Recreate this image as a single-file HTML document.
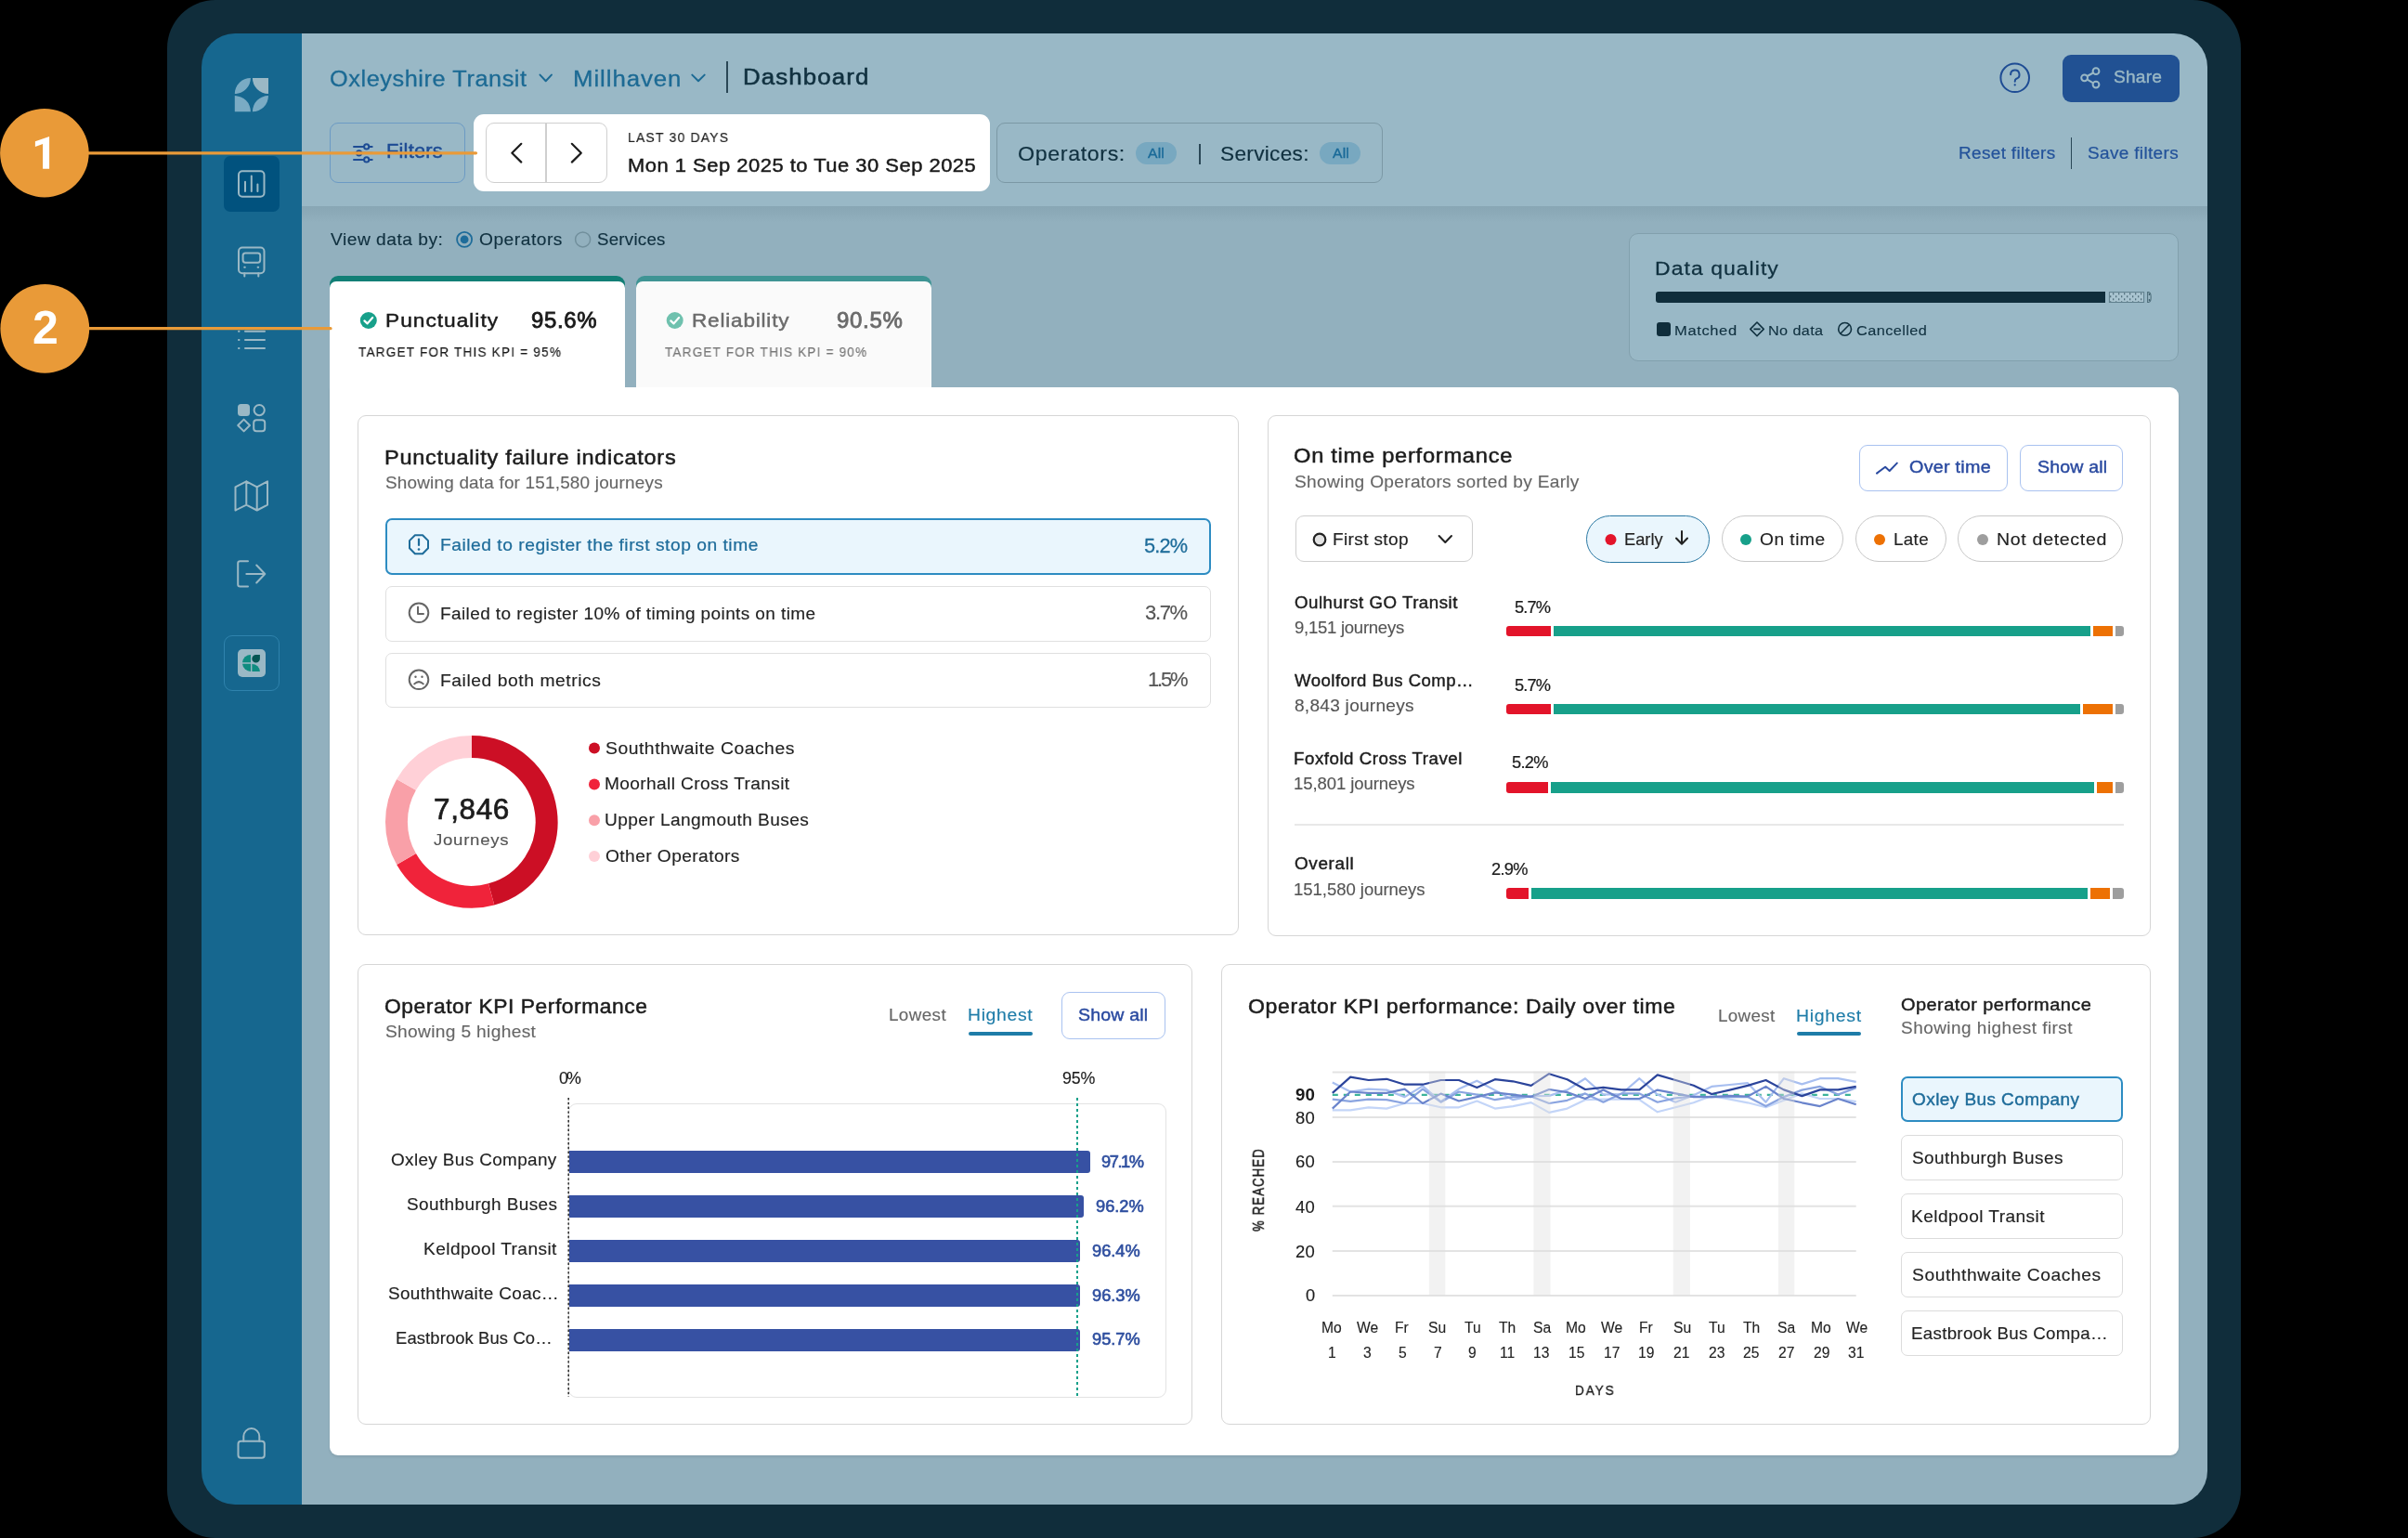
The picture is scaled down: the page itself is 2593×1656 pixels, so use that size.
<!DOCTYPE html>
<html><head><meta charset="utf-8"><style>
html,body{margin:0;padding:0;}
body{width:2593px;height:1656px;position:relative;overflow:hidden;background:#000;font-family:"Liberation Sans", sans-serif;}
.t{position:absolute;white-space:nowrap;line-height:1;font-family:"Liberation Sans", sans-serif;will-change:transform;}
svg{position:absolute;overflow:visible;}
</style></head><body>
<div style="position:absolute;left:180.0px;top:0.0px;width:2233.0px;height:1656.0px;background:#102d3b;border-radius:52px;"></div>
<div style="position:absolute;left:0;top:0;width:2593px;height:1656px;clip-path:inset(36px 216px 36px 217px round 36px);">
<div style="position:absolute;left:217.0px;top:36.0px;width:108.0px;height:1584.0px;background:#16678f;"></div>
<div style="position:absolute;left:325.0px;top:36.0px;width:2052.0px;height:186.0px;background:#99b8c6;"></div>
<div style="position:absolute;left:325.0px;top:222.0px;width:2052.0px;height:1398.0px;background:#92b0be;"></div>
<div style="position:absolute;left:325.0px;top:222.0px;width:2052.0px;height:18.0px;background:linear-gradient(#88a6b4,rgba(146,176,190,0));"></div>
</div>
<svg style="left:250px;top:80px;" width="45" height="45" viewBox="250 80 45 45"><path d="M252.8,101.1 A17.1,17.1 0 0 1 269.9,84.0 A17.1,17.1 0 0 1 252.8,101.1 Z" fill="#7aabc4"/><path d="M271.9,84.0 L289.0,84.0 L289.0,101.1 A17.1,17.1 0 0 1 271.9,84.0 Z" fill="#9ab8c5"/><path d="M252.8,103.1 A17.1,17.1 0 0 1 269.9,120.2 L252.8,120.2 Z" fill="#7aabc4"/><path d="M271.9,120.2 A17.1,17.1 0 0 1 289.0,103.1 A17.1,17.1 0 0 1 271.9,120.2 Z" fill="#7aabc4"/></svg>
<div style="position:absolute;left:241.0px;top:168.0px;width:60.0px;height:60.0px;background:#01527e;border-radius:7px;"></div>
<svg style="left:250px;top:178px;" width="42" height="42" viewBox="250 178 42 42"><rect x="257" y="184.3" width="27.5" height="27.5" rx="4" fill="none" stroke="#9ab8c5" stroke-width="2" stroke-linecap="round" stroke-linejoin="round"/><path d="M264,195.8 V206 M270.8,189.5 V206 M277.4,198.5 V206" fill="none" stroke="#9ab8c5" stroke-width="2" stroke-linecap="round" stroke-linejoin="round"/></svg>
<svg style="left:250px;top:260px;" width="42" height="42" viewBox="250 260 42 42"><rect x="257" y="266.6" width="27.5" height="27.6" rx="4" fill="none" stroke="#9ab8c5" stroke-width="2" stroke-linecap="round" stroke-linejoin="round"/><rect x="261.6" y="272.4" width="18.6" height="10.3" rx="2.6" fill="none" stroke="#9ab8c5" stroke-width="2" stroke-linecap="round" stroke-linejoin="round"/><path d="M263.2,287.8 h0.6 M277.6,287.8 h0.6 M263.3,294.2 V297.4 M278.3,294.2 V297.4" fill="none" stroke="#9ab8c5" stroke-width="2" stroke-linecap="round" stroke-linejoin="round"/></svg>
<svg style="left:250px;top:350px;" width="42" height="30" viewBox="250 350 42 30"><path d="M257,356.8 h0.5 M257,366 h0.5 M257,374.9 h0.5 M264,356.8 H285 M264,366 H285 M264,374.9 H285" fill="none" stroke="#9ab8c5" stroke-width="2" stroke-linecap="round" stroke-linejoin="round"/></svg>
<svg style="left:250px;top:430px;" width="42" height="42" viewBox="250 430 42 42"><rect x="256" y="435.1" width="13" height="13" rx="3.5" fill="#9ab8c5"/><circle cx="279.2" cy="441.6" r="5.6" fill="none" stroke="#9ab8c5" stroke-width="2" stroke-linecap="round" stroke-linejoin="round"/><path d="M262.6,451.6 L269,458 L262.6,464.4 L256.2,458 Z" fill="none" stroke="#9ab8c5" stroke-width="2" stroke-linecap="round" stroke-linejoin="round"/><rect x="273.2" y="452.2" width="12" height="12" rx="3" fill="none" stroke="#9ab8c5" stroke-width="2" stroke-linecap="round" stroke-linejoin="round"/></svg>
<svg style="left:248px;top:512px;" width="46" height="44" viewBox="248 512 46 44"><path d="M253.5,524.3 L265.3,518.3 L276.7,524.3 L288,518.3 L288,543.6 L276.7,549.5 L265.3,543.6 L253.5,549.5 Z M265.3,518.3 V543.6 M276.7,524.3 V549.5" fill="none" stroke="#9ab8c5" stroke-width="2" stroke-linecap="round" stroke-linejoin="round"/></svg>
<svg style="left:250px;top:598px;" width="42" height="42" viewBox="250 598 42 42"><path d="M267,604.2 H258.5 Q256.2,604.2 256.2,606.5 V629.2 Q256.2,631.5 258.5,631.5 H267" fill="none" stroke="#9ab8c5" stroke-width="2" stroke-linecap="round" stroke-linejoin="round"/><path d="M265.3,618 H285.3 M276.2,608.5 L285.3,618 L276.2,627.5" fill="none" stroke="#9ab8c5" stroke-width="2" stroke-linecap="round" stroke-linejoin="round"/></svg>
<div style="position:absolute;left:241.0px;top:684.0px;width:59.5px;height:59.5px;border:1.8px solid #2f83ad;border-radius:9px;box-sizing:border-box;"></div>
<div style="position:absolute;left:256.0px;top:699.0px;width:30.0px;height:30.0px;background:#9ab8c5;border-radius:5px;"></div>
<svg style="left:256px;top:699px;" width="30" height="30" viewBox="256 699 30 30"><path d="M270,704.9 A9,9 0 0 0 261,713.2 H270 Z" fill="#0e8c80"/><path d="M261,714.8 A9,9 0 0 0 270,722.9 V714.8 Z" fill="#0e8c80"/><path d="M271.4,714.9 A8.4,8.4 0 0 1 279.9,722.9 H271.4 Z" fill="#0e8c80"/><path d="M271.3,709.3 A4.3,4.3 0 0 0 279.9,709.3 V705 H275.6 A4.3,4.3 0 0 0 271.3,709.3 Z" fill="#045552"/></svg>
<svg style="left:250px;top:1530px;" width="42" height="46" viewBox="250 1530 42 46"><path d="M262.3,1551.8 V1546.6 A8.5,8.5 0 0 1 279.3,1546.6 V1551.8" fill="none" stroke="#9ab8c5" stroke-width="2" stroke-linecap="round" stroke-linejoin="round"/><rect x="256.5" y="1551.8" width="28.3" height="17.9" rx="3" fill="none" stroke="#9ab8c5" stroke-width="2" stroke-linecap="round" stroke-linejoin="round"/></svg>
<svg style="left:575px;top:72px;" width="190" height="24" viewBox="575 72 190 24"><path d="M581.5,80.6 L587.7,87.2 L593.9,80.6 M745.3,80.6 L752,87.2 L758.7,80.6" fill="none" stroke="#1c6a94" stroke-width="2" stroke-linecap="round" stroke-linejoin="round"/></svg>
<div style="position:absolute;left:782.0px;top:66.2px;width:2.0px;height:34.1px;background:#2a4756;"></div>
<svg style="left:2150px;top:64px;" width="40" height="40" viewBox="2150 64 40 40"><circle cx="2169.7" cy="83.8" r="15.3" fill="none" stroke="#1e4c94" stroke-width="2"/><path d="M2165.1,80.3 A4.7,4.7 0 1 1 2171.4,84.7 Q2169.7,85.6 2169.7,87.8" fill="none" stroke="#1e4c94" stroke-width="2" stroke-linecap="round"/><circle cx="2169.7" cy="91.4" r="1.15" fill="#1e4c94"/></svg>
<div style="position:absolute;left:2221.0px;top:58.8px;width:126.0px;height:50.8px;background:#215193;border-radius:9px;"></div>
<svg style="left:2235px;top:66px;" width="30" height="34" viewBox="2235 66 30 34"><circle cx="2257" cy="76.7" r="3.4" fill="none" stroke="#9ab8c5" stroke-width="2"/><circle cx="2244.6" cy="83.8" r="3.4" fill="none" stroke="#9ab8c5" stroke-width="2"/><circle cx="2257" cy="91.1" r="3.4" fill="none" stroke="#9ab8c5" stroke-width="2"/><path d="M2247.6,82 L2254,78.5 M2247.6,85.6 L2254,89.3" stroke="#9ab8c5" stroke-width="2"/></svg>
<div style="position:absolute;left:355.0px;top:132.3px;width:146.4px;height:65.1px;border:1.5px solid #6b9ac4;border-radius:9px;box-sizing:border-box;"></div>
<svg style="left:375px;top:150px;" width="32" height="30" viewBox="375 150 32 30"><path d="M381,157.9 H392 M397.5,157.9 H400.7 M381,164.8 H384 M389.3,164.8 H400.7 M381,171.9 H392 M397.5,171.9 H400.7" stroke="#1e4c94" stroke-width="2" stroke-linecap="round"/><circle cx="394.7" cy="157.9" r="2.6" fill="none" stroke="#1e4c94" stroke-width="2"/><circle cx="386.6" cy="164.8" r="2.6" fill="none" stroke="#1e4c94" stroke-width="2"/><circle cx="394.7" cy="171.9" r="2.6" fill="none" stroke="#1e4c94" stroke-width="2"/></svg>
<div style="position:absolute;left:510.2px;top:122.8px;width:555.8px;height:82.9px;background:#fff;border-radius:11px;"></div>
<div style="position:absolute;left:523.2px;top:132.0px;width:130.9px;height:65.4px;border:1.5px solid #cfcfcf;border-radius:9px;box-sizing:border-box;"></div>
<div style="position:absolute;left:587.1px;top:132.7px;width:1.5px;height:64.0px;background:#cfcfcf;"></div>
<svg style="left:545px;top:150px;" width="90" height="30" viewBox="545 150 90 30"><path d="M561.3,154.8 L551.3,164.7 L561.3,174.6 M615.8,154.8 L625.8,164.7 L615.8,174.6" fill="none" stroke="#1c1c1c" stroke-width="2.2" stroke-linecap="round" stroke-linejoin="round"/></svg>
<div style="position:absolute;left:1073.0px;top:132.3px;width:416.0px;height:65.1px;border:1.5px solid #7b98a5;border-radius:9px;box-sizing:border-box;"></div>
<div style="position:absolute;left:1223.0px;top:153.0px;width:44.0px;height:24.0px;background:#78a8c0;border-radius:12px;"></div>
<div style="position:absolute;left:1291.2px;top:155.0px;width:1.8px;height:21.5px;background:#2a4756;"></div>
<div style="position:absolute;left:1421.0px;top:153.0px;width:43.5px;height:24.0px;background:#78a8c0;border-radius:12px;"></div>
<div style="position:absolute;left:2229.5px;top:148.0px;width:1.8px;height:34.0px;background:#2a4756;"></div>
<svg style="left:488px;top:246px;" width="150" height="24" viewBox="488 246 150 24"><circle cx="500.1" cy="257.9" r="8" fill="none" stroke="#1e6c9a" stroke-width="1.8"/><circle cx="500.1" cy="257.9" r="4.4" fill="#1e6c9a"/><circle cx="627.6" cy="257.9" r="8" fill="none" stroke="#718f9c" stroke-width="1.5"/></svg>
<div style="position:absolute;left:1753.6px;top:250.5px;width:592.4px;height:138.0px;background:#99b8c6;border:1.5px solid #82a0ad;border-radius:10px;box-sizing:border-box;"></div>
<div style="position:absolute;left:1783.4px;top:314.3px;width:483.8px;height:11.5px;background:#0f2d3b;border-radius:3px 0 0 3px;"></div>
<svg style="left:2268px;top:312px" width="52" height="16" viewBox="2268 312 52 16"><defs><pattern id="dq" x="2271" y="313.3" width="6" height="6" patternUnits="userSpaceOnUse"><rect width="6" height="6" fill="#a9c4d0"/><circle cx="4.7" cy="3" r="0.75" fill="#1a3a48"/><circle cx="1.7" cy="6" r="0.75" fill="#1a3a48"/><circle cx="1.7" cy="0" r="0.75" fill="#1a3a48"/></pattern></defs><rect x="2271.4" y="314.6" width="37.2" height="10.9" fill="url(#dq)" stroke="#5f7f8d" stroke-width="1"/><path d="M2312.6,314.6 H2313.6 A2.6,5.45 0 0 1 2313.6,325.5 H2312.6 Z" fill="#9ab8c5" stroke="#4f6f7c" stroke-width="1.1"/><circle cx="2314.4" cy="317" r="0.8" fill="#1a3a48"/><circle cx="2314.4" cy="323" r="0.8" fill="#1a3a48"/></svg>
<div style="position:absolute;left:1784.0px;top:347.2px;width:15.0px;height:14.8px;background:#0f2d3b;border-radius:3px;"></div>
<svg style="left:1880px;top:344px;" width="150" height="22" viewBox="1880 344 150 22"><path d="M1892,347 L1899.2,354.4 L1892,361.8 L1884.8,354.4 Z M1888.4,354.4 H1895.6" fill="none" stroke="#10303f" stroke-width="1.6" stroke-linejoin="round"/><circle cx="1986.6" cy="354.4" r="6.9" fill="none" stroke="#10303f" stroke-width="1.6"/><path d="M1982,359 L1991.2,349.8" stroke="#10303f" stroke-width="1.6"/></svg>
<div style="position:absolute;left:354.8px;top:417.0px;width:1991.2px;height:1150.0px;background:#fff;border-radius:0 9px 9px 9px;box-shadow:0 2px 3px rgba(0,0,0,0.08);"></div>
<div style="position:absolute;left:354.8px;top:297.0px;width:318.2px;height:124.0px;background:#127f76;border-radius:9px 9px 0 0;"></div>
<div style="position:absolute;left:354.8px;top:303.0px;width:318.2px;height:118.0px;background:#fff;border-radius:7px 7px 0 0;"></div>
<div style="position:absolute;left:684.8px;top:297.0px;width:318.0px;height:120.0px;background:#3f9494;border-radius:9px 9px 0 0;"></div>
<div style="position:absolute;left:684.8px;top:303.0px;width:318.0px;height:114.0px;background:#fafafa;border-radius:7px 7px 0 0;"></div>
<svg style="left:385px;top:334px;" width="360" height="24" viewBox="385 334 360 24"><circle cx="396.8" cy="345" r="9" fill="#17a08a"/><path d="M392.4,345.4 L395.6,348.4 L401.2,342" fill="none" stroke="#fff" stroke-width="2.2" stroke-linecap="round" stroke-linejoin="round"/><circle cx="726.7" cy="345" r="9" fill="#6fc1ae"/><path d="M722.3,345.4 L725.5,348.4 L731.1,342" fill="none" stroke="#fff" stroke-width="2.2" stroke-linecap="round" stroke-linejoin="round"/></svg>
<div style="position:absolute;left:385.0px;top:447.3px;width:948.5px;height:560.2px;border:1.8px solid #d6d6d6;border-radius:9px;box-sizing:border-box;"></div>
<div style="position:absolute;left:415.0px;top:558.0px;width:889.0px;height:60.5px;background:#eaf6fd;border:2px solid #2d8cc2;border-radius:7px;box-sizing:border-box;"></div>
<div style="position:absolute;left:415.0px;top:631.0px;width:889.0px;height:59.5px;border:1.5px solid #e0e0e0;border-radius:7px;box-sizing:border-box;"></div>
<div style="position:absolute;left:415.0px;top:703.0px;width:889.0px;height:59.0px;border:1.5px solid #e0e0e0;border-radius:7px;box-sizing:border-box;"></div>
<svg style="left:436px;top:570px;" width="32" height="32" viewBox="436 570 32 32"><polygon points="461.0,590.3 455.1,596.2 446.9,596.2 441.0,590.3 441.0,582.1 446.9,576.2 455.1,576.2 461.0,582.1" fill="none" stroke="#1e6c9a" stroke-width="2" stroke-linejoin="round"/><path d="M451,580.5 V587" stroke="#1e6c9a" stroke-width="2.2" stroke-linecap="round"/><circle cx="451" cy="591.5" r="1.3" fill="#1e6c9a"/></svg>
<svg style="left:436px;top:644px;" width="32" height="32" viewBox="436 644 32 32"><circle cx="451" cy="659.8" r="10.3" fill="none" stroke="#666" stroke-width="2"/><path d="M450,653.5 V661 H456" fill="none" stroke="#666" stroke-width="2" stroke-linecap="round" stroke-linejoin="round"/></svg>
<svg style="left:436px;top:716px;" width="32" height="32" viewBox="436 716 32 32"><circle cx="451" cy="731.8" r="10.3" fill="none" stroke="#666" stroke-width="2"/><path d="M446.2,736.4 Q451,731.8 455.8,736.4" fill="none" stroke="#666" stroke-width="2" stroke-linecap="round"/><circle cx="447.5" cy="728.8" r="1.2" fill="#666"/><circle cx="454.5" cy="728.8" r="1.2" fill="#666"/></svg>
<svg style="left:405px;top:782px;" width="206" height="206" viewBox="405 782 206 206"><path d="M507.80,804.05 A80.85,80.85 0 0 1 529.13,962.88" fill="none" stroke="#cc0f25" stroke-width="23.9"/><path d="M529.13,962.88 A80.85,80.85 0 0 1 437.57,924.96" fill="none" stroke="#f0233a" stroke-width="23.9"/><path d="M437.57,924.96 A80.85,80.85 0 0 1 437.57,844.84" fill="none" stroke="#f9a0a8" stroke-width="23.9"/><path d="M437.57,844.84 A80.85,80.85 0 0 1 507.80,804.05" fill="none" stroke="#ffd0d7" stroke-width="23.9"/></svg>
<svg style="left:630px;top:795px;" width="20" height="130" viewBox="630 795 20 130"><circle cx="640" cy="805.6" r="6" fill="#cc0f25"/><circle cx="640" cy="844.4" r="6" fill="#f0233a"/><circle cx="640" cy="883.2" r="6" fill="#f9a0a8"/><circle cx="640" cy="922.0" r="6" fill="#ffd0d7"/></svg>
<div style="position:absolute;left:1364.5px;top:447.0px;width:951.4px;height:560.5px;border:1.8px solid #d6d6d6;border-radius:9px;box-sizing:border-box;"></div>
<div style="position:absolute;left:2002.0px;top:478.8px;width:159.6px;height:50.1px;border:1.5px solid #a9c2f0;border-radius:9px;box-sizing:border-box;"></div>
<div style="position:absolute;left:2174.5px;top:478.8px;width:111.5px;height:50.1px;border:1.5px solid #a9c2f0;border-radius:9px;box-sizing:border-box;"></div>
<svg style="left:2015px;top:492px;" width="35" height="24" viewBox="2015 492 35 24"><path d="M2021,509.6 L2030.1,502.8 L2034.7,507 L2042.8,498.6" fill="none" stroke="#2a4aa0" stroke-width="2" stroke-linecap="round" stroke-linejoin="round"/></svg>
<div style="position:absolute;left:1395.0px;top:555.0px;width:190.5px;height:50.0px;border:1.5px solid #cfcfcf;border-radius:9px;box-sizing:border-box;"></div>
<div style="position:absolute;left:1708.0px;top:555.0px;width:133.0px;height:50.5px;background:#eaf6fd;border:1.7px solid #2a78a3;border-radius:26px;box-sizing:border-box;"></div>
<div style="position:absolute;left:1854.0px;top:555.0px;width:130.6px;height:50.0px;border:1.6px solid #c8c8c8;border-radius:26px;box-sizing:border-box;"></div>
<div style="position:absolute;left:1997.7px;top:555.0px;width:97.9px;height:50.0px;border:1.6px solid #c8c8c8;border-radius:26px;box-sizing:border-box;"></div>
<div style="position:absolute;left:2108.4px;top:555.0px;width:177.6px;height:50.0px;border:1.6px solid #c8c8c8;border-radius:26px;box-sizing:border-box;"></div>
<svg style="left:1405px;top:565px;" width="890" height="32" viewBox="1405 565 890 32"><circle cx="1421" cy="581" r="6.3" fill="#e3e3e3" stroke="#222" stroke-width="2.2"/><path d="M1549.6,577 L1556.3,584 L1563,577" fill="none" stroke="#222" stroke-width="2" stroke-linecap="round" stroke-linejoin="round"/><circle cx="1734.5" cy="581" r="6" fill="#e3142a"/><path d="M1811,572 V585.5 M1805,579.5 L1811,585.8 L1817,579.5" fill="none" stroke="#222" stroke-width="2" stroke-linecap="round" stroke-linejoin="round"/><circle cx="1880" cy="581" r="6" fill="#17a08a"/><circle cx="2024" cy="581" r="6" fill="#ed7104"/><circle cx="2135" cy="581" r="6" fill="#9e9e9e"/></svg>
<div style="position:absolute;left:1622.0px;top:673.6px;width:48.0px;height:11.8px;background:#e3142a;border-radius:3px 0 0 3px;"></div>
<div style="position:absolute;left:1673.0px;top:673.6px;width:577.8px;height:11.8px;background:#17a08a;"></div>
<div style="position:absolute;left:2253.8px;top:673.6px;width:21.0px;height:11.8px;background:#ed7104;"></div>
<div style="position:absolute;left:2277.9px;top:673.6px;width:9.0px;height:11.8px;background:#9e9e9e;border-radius:0 3px 3px 0;"></div>
<div style="position:absolute;left:1622.0px;top:757.7px;width:48.0px;height:11.8px;background:#e3142a;border-radius:3px 0 0 3px;"></div>
<div style="position:absolute;left:1673.0px;top:757.7px;width:567.3px;height:11.8px;background:#17a08a;"></div>
<div style="position:absolute;left:2243.1px;top:757.7px;width:31.7px;height:11.8px;background:#ed7104;"></div>
<div style="position:absolute;left:2277.9px;top:757.7px;width:9.0px;height:11.8px;background:#9e9e9e;border-radius:0 3px 3px 0;"></div>
<div style="position:absolute;left:1622.0px;top:841.8px;width:45.0px;height:11.8px;background:#e3142a;border-radius:3px 0 0 3px;"></div>
<div style="position:absolute;left:1670.0px;top:841.8px;width:585.1px;height:11.8px;background:#17a08a;"></div>
<div style="position:absolute;left:2258.1px;top:841.8px;width:16.7px;height:11.8px;background:#ed7104;"></div>
<div style="position:absolute;left:2277.9px;top:841.8px;width:9.0px;height:11.8px;background:#9e9e9e;border-radius:0 3px 3px 0;"></div>
<div style="position:absolute;left:1622.0px;top:955.8px;width:24.0px;height:11.8px;background:#e3142a;border-radius:3px 0 0 3px;"></div>
<div style="position:absolute;left:1649.0px;top:955.8px;width:598.8px;height:11.8px;background:#17a08a;"></div>
<div style="position:absolute;left:2250.8px;top:955.8px;width:21.0px;height:11.8px;background:#ed7104;"></div>
<div style="position:absolute;left:2274.8px;top:955.8px;width:12.1px;height:11.8px;background:#9e9e9e;border-radius:0 3px 3px 0;"></div>
<div style="position:absolute;left:1394.3px;top:887.0px;width:892.7px;height:2.0px;background:#e8e8e8;"></div>
<div style="position:absolute;left:385.4px;top:1038.0px;width:898.6px;height:496.0px;border:1.8px solid #d6d6d6;border-radius:9px;box-sizing:border-box;"></div>
<div style="position:absolute;left:1043.4px;top:1111.0px;width:68.6px;height:3.5px;background:#1e7ca8;border-radius:2px;"></div>
<div style="position:absolute;left:1142.9px;top:1068.0px;width:111.7px;height:50.5px;border:1.5px solid #a9c2f0;border-radius:9px;box-sizing:border-box;"></div>
<div style="position:absolute;left:612.0px;top:1187.5px;width:643.6px;height:317.7px;border:1.5px solid #e3e3e3;border-radius:9px;box-sizing:border-box;"></div>
<div style="position:absolute;left:605.0px;top:1195.0px;width:7.0px;height:305.0px;background:#fff;"></div>
<div style="position:absolute;left:612.6px;top:1239.1px;width:561.1px;height:23.6px;background:#3751a3;border-radius:0 3px 3px 0;"></div>
<div style="position:absolute;left:612.6px;top:1287.2px;width:554.8px;height:23.6px;background:#3751a3;border-radius:0 3px 3px 0;"></div>
<div style="position:absolute;left:612.6px;top:1335.0px;width:550.5px;height:23.6px;background:#3751a3;border-radius:0 3px 3px 0;"></div>
<div style="position:absolute;left:612.6px;top:1383.3px;width:550.5px;height:23.6px;background:#3751a3;border-radius:0 3px 3px 0;"></div>
<div style="position:absolute;left:612.6px;top:1431.1px;width:550.5px;height:23.6px;background:#3751a3;border-radius:0 3px 3px 0;"></div>
<svg style="left:605px;top:1178px;" width="570" height="330" viewBox="605 1178 570 330"><path d="M612.2,1182 V1504" stroke="#333" stroke-width="1.6" stroke-dasharray="2.4 2.4"/><path d="M1160,1182 V1504" stroke="#17a08a" stroke-width="2" stroke-dasharray="3 3"/></svg>
<div style="position:absolute;left:1314.8px;top:1038.0px;width:1001.1px;height:496.0px;border:1.8px solid #d6d6d6;border-radius:9px;box-sizing:border-box;"></div>
<div style="position:absolute;left:1935.4px;top:1111.4px;width:69.1px;height:3.2px;background:#1e7ca8;border-radius:2px;"></div>
<div style="position:absolute;left:2047.3px;top:1158.6px;width:239.2px;height:49.7px;background:#eaf6fd;border:2px solid #2d8cc2;border-radius:7px;box-sizing:border-box;"></div>
<div style="position:absolute;left:2047.3px;top:1221.6px;width:239.2px;height:49.7px;border:1.5px solid #dcdcdc;border-radius:7px;box-sizing:border-box;"></div>
<div style="position:absolute;left:2047.3px;top:1284.6px;width:239.2px;height:49.7px;border:1.5px solid #dcdcdc;border-radius:7px;box-sizing:border-box;"></div>
<div style="position:absolute;left:2047.3px;top:1347.6px;width:239.2px;height:49.7px;border:1.5px solid #dcdcdc;border-radius:7px;box-sizing:border-box;"></div>
<div style="position:absolute;left:2047.3px;top:1410.6px;width:239.2px;height:49.7px;border:1.5px solid #dcdcdc;border-radius:7px;box-sizing:border-box;"></div>
<svg style="left:1420px;top:1140px;" width="600" height="270" viewBox="1420 1140 600 270"><path d="M1434.8,1154.6 H1998.7" stroke="#e3e3e3" stroke-width="2"/><path d="M1434.8,1202.9 H1998.7" stroke="#e3e3e3" stroke-width="2"/><path d="M1434.8,1251 H1998.7" stroke="#e3e3e3" stroke-width="2"/><path d="M1434.8,1298.8 H1998.7" stroke="#e3e3e3" stroke-width="2"/><path d="M1434.8,1347 H1998.7" stroke="#e3e3e3" stroke-width="2"/><path d="M1434.8,1394.9 H1998.7" stroke="#e3e3e3" stroke-width="2"/><path d="M1434.8,1178.9 H1998.7" stroke="#3cb39a" stroke-width="2.2" stroke-dasharray="6 6"/><polyline points="1434.8,1195.4 1454.2,1195.4 1473.7,1192.3 1493.1,1193.6 1512.6,1188.0 1532.0,1188.0 1551.5,1192.3 1570.9,1192.3 1590.4,1185.5 1609.8,1193.6 1629.2,1191.1 1648.7,1187.1 1668.1,1197.9 1687.6,1193.6 1707.0,1184.2 1726.5,1183.6 1745.9,1183.6 1765.4,1184.2 1784.8,1197.3 1804.3,1192.3 1823.7,1187.3 1843.1,1179.9 1862.6,1183.6 1882.0,1187.3 1901.5,1192.3 1920.9,1184.8 1940.4,1177.4 1959.8,1183.0 1979.3,1183.0 1998.7,1186.1" fill="none" stroke="#c3d5f8" stroke-width="2.2" stroke-linejoin="round"/><polyline points="1434.8,1165.5 1454.2,1175.5 1473.7,1172.6 1493.1,1173.6 1512.6,1181.1 1532.0,1169.3 1551.5,1186.1 1570.9,1172.6 1590.4,1163.7 1609.8,1173.9 1629.2,1184.2 1648.7,1180.1 1668.1,1179.9 1687.6,1173.6 1707.0,1161.2 1726.5,1178.6 1745.9,1178.0 1765.4,1161.2 1784.8,1178.6 1804.3,1186.7 1823.7,1179.2 1843.1,1169.9 1862.6,1168.0 1882.0,1166.2 1901.5,1186.7 1920.9,1161.2 1940.4,1167.4 1959.8,1161.2 1979.3,1161.2 1998.7,1164.9" fill="none" stroke="#a8bff0" stroke-width="2.2" stroke-linejoin="round"/><polyline points="1434.8,1183.6 1454.2,1185.8 1473.7,1183.6 1493.1,1184.2 1512.6,1188.0 1532.0,1172.6 1551.5,1186.7 1570.9,1175.5 1590.4,1178.6 1609.8,1184.2 1629.2,1181.1 1648.7,1180.5 1668.1,1188.0 1687.6,1184.8 1707.0,1177.4 1726.5,1186.7 1745.9,1177.4 1765.4,1177.4 1784.8,1186.7 1804.3,1182.4 1823.7,1180.5 1843.1,1181.1 1862.6,1181.1 1882.0,1181.1 1901.5,1191.1 1920.9,1181.1 1940.4,1173.6 1959.8,1169.9 1979.3,1178.6 1998.7,1171.1" fill="none" stroke="#8aa4e0" stroke-width="2.2" stroke-linejoin="round"/><polyline points="1434.8,1193.6 1454.2,1175.5 1473.7,1176.8 1493.1,1176.8 1512.6,1172.6 1532.0,1188.0 1551.5,1177.6 1570.9,1185.5 1590.4,1181.1 1609.8,1176.4 1629.2,1178.6 1648.7,1181.1 1668.1,1173.0 1687.6,1176.1 1707.0,1183.0 1726.5,1173.6 1745.9,1183.0 1765.4,1183.0 1784.8,1173.6 1804.3,1177.4 1823.7,1181.1 1843.1,1181.1 1862.6,1179.9 1882.0,1180.5 1901.5,1169.9 1920.9,1183.0 1940.4,1187.3 1959.8,1191.1 1979.3,1183.0 1998.7,1189.2" fill="none" stroke="#6a84cc" stroke-width="2.2" stroke-linejoin="round"/><polyline points="1434.8,1176.8 1454.2,1159.7 1473.7,1163.0 1493.1,1161.8 1512.6,1167.7 1532.0,1167.7 1551.5,1163.0 1570.9,1163.0 1590.4,1171.1 1609.8,1162.2 1629.2,1164.3 1648.7,1168.9 1668.1,1156.2 1687.6,1162.2 1707.0,1173.0 1726.5,1170.9 1745.9,1173.4 1765.4,1173.4 1784.8,1157.4 1804.3,1163.0 1823.7,1168.7 1843.1,1178.0 1862.6,1173.6 1882.0,1168.9 1901.5,1163.0 1920.9,1173.4 1940.4,1180.1 1959.8,1173.4 1979.3,1173.4 1998.7,1169.9" fill="none" stroke="#2b449b" stroke-width="2.2" stroke-linejoin="round"/><rect x="1538.8" y="1153.6" width="17.5" height="241.3" fill="rgba(222,222,222,0.4)"/><rect x="1651.4" y="1153.6" width="18.1" height="241.3" fill="rgba(222,222,222,0.4)"/><rect x="1801.7" y="1153.6" width="18.2" height="241.3" fill="rgba(222,222,222,0.4)"/><rect x="1914.8" y="1153.6" width="17.5" height="241.3" fill="rgba(222,222,222,0.4)"/></svg>
<div class="t" style="left:354.6px;top:72.7px;font-size:24.06px;font-weight:400;color:#1c6a94;letter-spacing:0.55px;-webkit-text-stroke:0.30px #1c6a94;transform:scaleX(1.051);transform-origin:0 0;">Oxleyshire Transit</div>
<div class="t" style="left:617.4px;top:72.7px;font-size:24.06px;font-weight:400;color:#1c6a94;letter-spacing:0.86px;-webkit-text-stroke:0.30px #1c6a94;transform:scaleX(1.074);transform-origin:0 0;">Millhaven</div>
<div class="t" style="left:800.2px;top:71.2px;font-size:24.06px;font-weight:400;color:#10303f;letter-spacing:1.02px;-webkit-text-stroke:0.54px #10303f;transform:scaleX(1.076);transform-origin:0 0;">Dashboard</div>
<div class="t" style="left:2276.1px;top:73.7px;font-size:18.84px;font-weight:400;color:#9ab8c5;letter-spacing:0.21px;-webkit-text-stroke:0.42px #9ab8c5;transform:scaleX(1.017);transform-origin:0 0;">Share</div>
<div class="t" style="left:416.0px;top:153.3px;font-size:21.30px;font-weight:400;color:#1e4c94;letter-spacing:0.22px;-webkit-text-stroke:0.48px #1e4c94;transform:scaleX(1.024);transform-origin:0 0;">Filters</div>
<div class="t" style="left:675.8px;top:140.1px;font-size:15.51px;font-weight:400;color:#222222;letter-spacing:1.33px;-webkit-text-stroke:0.19px #222222;transform:scaleX(0.900);transform-origin:0 0;">LAST 30 DAYS</div>
<div class="t" style="left:675.8px;top:167.0px;font-size:21.01px;font-weight:400;color:#1a1a1a;letter-spacing:0.47px;-webkit-text-stroke:0.47px #1a1a1a;transform:scaleX(1.046);transform-origin:0 0;">Mon 1 Sep 2025 to Tue 30 Sep 2025</div>
<div class="t" style="left:1096.2px;top:154.7px;font-size:22.03px;font-weight:400;color:#10303f;letter-spacing:0.59px;-webkit-text-stroke:0.17px #10303f;transform:scaleX(1.055);transform-origin:0 0;">Operators:</div>
<div class="t" style="left:1236.2px;top:157.2px;font-size:15.36px;font-weight:400;color:#1a6a98;letter-spacing:0.17px;-webkit-text-stroke:0.35px #1a6a98;transform:scaleX(1.021);transform-origin:0 0;">All</div>
<div class="t" style="left:1314.3px;top:154.7px;font-size:22.03px;font-weight:400;color:#10303f;letter-spacing:0.30px;-webkit-text-stroke:0.17px #10303f;transform:scaleX(1.028);transform-origin:0 0;">Services:</div>
<div class="t" style="left:1434.6px;top:157.2px;font-size:15.36px;font-weight:400;color:#1a6a98;letter-spacing:0.17px;-webkit-text-stroke:0.35px #1a6a98;transform:scaleX(1.021);transform-origin:0 0;">All</div>
<div class="t" style="left:2108.6px;top:155.7px;font-size:18.26px;font-weight:400;color:#23529a;letter-spacing:0.31px;-webkit-text-stroke:0.23px #23529a;transform:scaleX(1.041);transform-origin:0 0;">Reset filters</div>
<div class="t" style="left:2247.7px;top:155.7px;font-size:18.26px;font-weight:400;color:#23529a;letter-spacing:0.32px;-webkit-text-stroke:0.23px #23529a;transform:scaleX(1.041);transform-origin:0 0;">Save filters</div>
<div class="t" style="left:355.6px;top:248.5px;font-size:18.26px;font-weight:400;color:#10303f;letter-spacing:0.46px;-webkit-text-stroke:0.14px #10303f;transform:scaleX(1.053);transform-origin:0 0;">View data by:</div>
<div class="t" style="left:515.8px;top:248.5px;font-size:18.26px;font-weight:400;color:#10303f;letter-spacing:0.49px;-webkit-text-stroke:0.14px #10303f;transform:scaleX(1.051);transform-origin:0 0;">Operators</div>
<div class="t" style="left:643.1px;top:248.5px;font-size:18.26px;font-weight:400;color:#10303f;letter-spacing:0.24px;-webkit-text-stroke:0.14px #10303f;transform:scaleX(1.024);transform-origin:0 0;">Services</div>
<div class="t" style="left:1782.4px;top:278.6px;font-size:20.72px;font-weight:400;color:#10303f;letter-spacing:0.96px;-webkit-text-stroke:0.26px #10303f;transform:scaleX(1.107);transform-origin:0 0;">Data quality</div>
<div class="t" style="left:1803.0px;top:348.4px;font-size:15.51px;font-weight:400;color:#10303f;letter-spacing:0.59px;-webkit-text-stroke:0.12px #10303f;transform:scaleX(1.065);transform-origin:0 0;">Matched</div>
<div class="t" style="left:1903.8px;top:348.4px;font-size:15.51px;font-weight:400;color:#10303f;letter-spacing:0.38px;-webkit-text-stroke:0.12px #10303f;transform:scaleX(1.045);transform-origin:0 0;">No data</div>
<div class="t" style="left:1999.1px;top:348.4px;font-size:15.51px;font-weight:400;color:#10303f;letter-spacing:0.41px;-webkit-text-stroke:0.12px #10303f;transform:scaleX(1.051);transform-origin:0 0;">Cancelled</div>
<div class="t" style="left:414.9px;top:335.3px;font-size:20.72px;font-weight:400;color:#1a1a1a;letter-spacing:0.90px;-webkit-text-stroke:0.47px #1a1a1a;transform:scaleX(1.097);transform-origin:0 0;">Punctuality</div>
<div class="t" style="left:571.5px;top:334.2px;font-size:23.04px;font-weight:400;color:#1a1a1a;letter-spacing:0.62px;-webkit-text-stroke:0.81px #1a1a1a;transform:scaleX(1.040);transform-origin:0 0;">95.6%</div>
<div class="t" style="left:385.7px;top:371.1px;font-size:15.36px;font-weight:400;color:#1a1a1a;letter-spacing:1.41px;-webkit-text-stroke:0.19px #1a1a1a;transform:scaleX(0.880);transform-origin:0 0;">TARGET FOR THIS KPI = 95%</div>
<div class="t" style="left:744.8px;top:335.3px;font-size:20.72px;font-weight:400;color:#6b6b6b;letter-spacing:0.73px;-webkit-text-stroke:0.47px #6b6b6b;transform:scaleX(1.089);transform-origin:0 0;">Reliability</div>
<div class="t" style="left:901.2px;top:334.2px;font-size:23.04px;font-weight:400;color:#6b6b6b;letter-spacing:0.67px;-webkit-text-stroke:0.81px #6b6b6b;transform:scaleX(1.043);transform-origin:0 0;">90.5%</div>
<div class="t" style="left:715.9px;top:371.1px;font-size:15.36px;font-weight:400;color:#777777;letter-spacing:1.37px;-webkit-text-stroke:0.19px #777777;transform:scaleX(0.880);transform-origin:0 0;">TARGET FOR THIS KPI = 90%</div>
<div class="t" style="left:414.2px;top:481.9px;font-size:21.88px;font-weight:400;color:#1c1c1c;letter-spacing:0.66px;-webkit-text-stroke:0.49px #1c1c1c;transform:scaleX(1.076);transform-origin:0 0;">Punctuality failure indicators</div>
<div class="t" style="left:415.1px;top:511.4px;font-size:18.55px;font-weight:400;color:#666666;letter-spacing:0.19px;-webkit-text-stroke:0.14px #666666;transform:scaleX(1.021);transform-origin:0 0;">Showing data for 151,580 journeys</div>
<div class="t" style="left:474.0px;top:579.0px;font-size:17.97px;font-weight:400;color:#1e6c9a;letter-spacing:0.49px;-webkit-text-stroke:0.22px #1e6c9a;transform:scaleX(1.070);transform-origin:0 0;">Failed to register the first stop on time</div>
<div class="t" style="left:1232.2px;top:576.8px;font-size:21.74px;font-weight:400;color:#1e6c9a;letter-spacing:-0.85px;-webkit-text-stroke:0.27px #1e6c9a;">5.2%</div>
<div class="t" style="left:474.0px;top:651.6px;font-size:18.12px;font-weight:400;color:#222;letter-spacing:0.38px;-webkit-text-stroke:0.14px #222;transform:scaleX(1.050);transform-origin:0 0;">Failed to register 10% of timing points on time</div>
<div class="t" style="left:1233.4px;top:649.1px;font-size:22.03px;font-weight:400;color:#555;letter-spacing:-1.36px;-webkit-text-stroke:0.17px #555;">3.7%</div>
<div class="t" style="left:474.0px;top:723.5px;font-size:18.12px;font-weight:400;color:#222;letter-spacing:0.52px;-webkit-text-stroke:0.14px #222;transform:scaleX(1.065);transform-origin:0 0;">Failed both metrics</div>
<div class="t" style="left:1235.8px;top:720.7px;font-size:22.03px;font-weight:400;color:#555;letter-spacing:-2.16px;-webkit-text-stroke:0.17px #555;">1.5%</div>
<div class="t" style="left:466.8px;top:856.1px;font-size:30.43px;font-weight:400;color:#1c1c1c;letter-spacing:0.62px;-webkit-text-stroke:0.68px #1c1c1c;transform:scaleX(1.034);transform-origin:0 0;">7,846</div>
<div class="t" style="left:467.1px;top:896.2px;font-size:17.39px;font-weight:400;color:#555;letter-spacing:0.67px;-webkit-text-stroke:0.13px #555;transform:scaleX(1.071);transform-origin:0 0;">Journeys</div>
<div class="t" style="left:652.1px;top:796.6px;font-size:18.41px;font-weight:400;color:#222;letter-spacing:0.48px;-webkit-text-stroke:0.14px #222;transform:scaleX(1.052);transform-origin:0 0;">Souththwaite Coaches</div>
<div class="t" style="left:651.0px;top:835.4px;font-size:18.41px;font-weight:400;color:#222;letter-spacing:0.34px;-webkit-text-stroke:0.14px #222;transform:scaleX(1.041);transform-origin:0 0;">Moorhall Cross Transit</div>
<div class="t" style="left:651.0px;top:874.2px;font-size:18.41px;font-weight:400;color:#222;letter-spacing:0.39px;-webkit-text-stroke:0.14px #222;transform:scaleX(1.040);transform-origin:0 0;">Upper Langmouth Buses</div>
<div class="t" style="left:652.1px;top:913.0px;font-size:18.41px;font-weight:400;color:#222;letter-spacing:0.39px;-webkit-text-stroke:0.14px #222;transform:scaleX(1.043);transform-origin:0 0;">Other Operators</div>
<div class="t" style="left:1393.2px;top:479.6px;font-size:22.32px;font-weight:400;color:#1c1c1c;letter-spacing:0.67px;-webkit-text-stroke:0.50px #1c1c1c;transform:scaleX(1.062);transform-origin:0 0;">On time performance</div>
<div class="t" style="left:1394.1px;top:510.2px;font-size:18.55px;font-weight:400;color:#666666;letter-spacing:0.29px;-webkit-text-stroke:0.14px #666666;transform:scaleX(1.033);transform-origin:0 0;">Showing Operators sorted by Early</div>
<div class="t" style="left:2056.2px;top:493.3px;font-size:19.28px;font-weight:400;color:#2a4aa0;letter-spacing:0.26px;-webkit-text-stroke:0.43px #2a4aa0;transform:scaleX(1.025);transform-origin:0 0;">Over time</div>
<div class="t" style="left:2193.6px;top:493.3px;font-size:19.28px;font-weight:400;color:#2a4aa0;letter-spacing:0.16px;-webkit-text-stroke:0.43px #2a4aa0;transform:scaleX(1.016);transform-origin:0 0;">Show all</div>
<div class="t" style="left:1435.0px;top:571.5px;font-size:18.26px;font-weight:400;color:#222;letter-spacing:0.34px;-webkit-text-stroke:0.14px #222;transform:scaleX(1.044);transform-origin:0 0;">First stop</div>
<div class="t" style="left:1749.1px;top:571.5px;font-size:18.26px;font-weight:400;color:#222;letter-spacing:0.00px;-webkit-text-stroke:0.14px #222;">Early</div>
<div class="t" style="left:1895.4px;top:571.5px;font-size:18.26px;font-weight:400;color:#222;letter-spacing:0.49px;-webkit-text-stroke:0.14px #222;transform:scaleX(1.048);transform-origin:0 0;">On time</div>
<div class="t" style="left:2038.6px;top:571.5px;font-size:18.26px;font-weight:400;color:#222;letter-spacing:0.34px;-webkit-text-stroke:0.14px #222;transform:scaleX(1.030);transform-origin:0 0;">Late</div>
<div class="t" style="left:2149.6px;top:571.5px;font-size:18.26px;font-weight:400;color:#222;letter-spacing:0.62px;-webkit-text-stroke:0.14px #222;transform:scaleX(1.073);transform-origin:0 0;">Not detected</div>
<div class="t" style="left:1394.2px;top:641.1px;font-size:17.68px;font-weight:400;color:#1c1c1c;letter-spacing:0.48px;-webkit-text-stroke:0.40px #1c1c1c;transform:scaleX(1.058);transform-origin:0 0;">Oulhurst GO Transit</div>
<div class="t" style="left:1394.1px;top:666.5px;font-size:18.55px;font-weight:400;color:#555;letter-spacing:-0.26px;-webkit-text-stroke:0.14px #555;">9,151 journeys</div>
<div class="t" style="left:1631.1px;top:644.5px;font-size:18.26px;font-weight:400;color:#1c1c1c;letter-spacing:-0.90px;-webkit-text-stroke:0.23px #1c1c1c;">5.7%</div>
<div class="t" style="left:1394.2px;top:725.1px;font-size:17.68px;font-weight:400;color:#1c1c1c;letter-spacing:0.48px;-webkit-text-stroke:0.40px #1c1c1c;transform:scaleX(1.049);transform-origin:0 0;">Woolford Bus Comp…</div>
<div class="t" style="left:1394.1px;top:750.9px;font-size:18.55px;font-weight:400;color:#555;letter-spacing:0.26px;-webkit-text-stroke:0.14px #555;transform:scaleX(1.029);transform-origin:0 0;">8,843 journeys</div>
<div class="t" style="left:1630.7px;top:728.5px;font-size:18.26px;font-weight:400;color:#1c1c1c;letter-spacing:-0.87px;-webkit-text-stroke:0.23px #1c1c1c;">5.7%</div>
<div class="t" style="left:1393.2px;top:809.1px;font-size:17.68px;font-weight:400;color:#1c1c1c;letter-spacing:0.48px;-webkit-text-stroke:0.40px #1c1c1c;transform:scaleX(1.060);transform-origin:0 0;">Foxfold Cross Travel</div>
<div class="t" style="left:1393.1px;top:834.5px;font-size:18.55px;font-weight:400;color:#555;letter-spacing:-0.09px;-webkit-text-stroke:0.14px #555;">15,801 journeys</div>
<div class="t" style="left:1627.6px;top:812.2px;font-size:18.26px;font-weight:400;color:#1c1c1c;letter-spacing:-0.70px;-webkit-text-stroke:0.23px #1c1c1c;">5.2%</div>
<div class="t" style="left:1394.2px;top:922.3px;font-size:17.68px;font-weight:400;color:#1c1c1c;letter-spacing:0.60px;-webkit-text-stroke:0.40px #1c1c1c;transform:scaleX(1.069);transform-origin:0 0;">Overall</div>
<div class="t" style="left:1393.1px;top:948.5px;font-size:18.55px;font-weight:400;color:#555;letter-spacing:-0.04px;-webkit-text-stroke:0.14px #555;">151,580 journeys</div>
<div class="t" style="left:1606.1px;top:926.5px;font-size:18.26px;font-weight:400;color:#1c1c1c;letter-spacing:-0.70px;-webkit-text-stroke:0.23px #1c1c1c;">2.9%</div>
<div class="t" style="left:414.4px;top:1072.8px;font-size:21.74px;font-weight:400;color:#1c1c1c;letter-spacing:0.53px;-webkit-text-stroke:0.49px #1c1c1c;transform:scaleX(1.050);transform-origin:0 0;">Operator KPI Performance</div>
<div class="t" style="left:415.3px;top:1101.7px;font-size:18.55px;font-weight:400;color:#666666;letter-spacing:0.32px;-webkit-text-stroke:0.14px #666666;transform:scaleX(1.034);transform-origin:0 0;">Showing 5 highest</div>
<div class="t" style="left:956.9px;top:1084.1px;font-size:18.26px;font-weight:400;color:#666666;letter-spacing:0.37px;-webkit-text-stroke:0.14px #666666;transform:scaleX(1.033);transform-origin:0 0;">Lowest</div>
<div class="t" style="left:1042.4px;top:1084.1px;font-size:18.26px;font-weight:400;color:#1e7ca8;letter-spacing:0.60px;-webkit-text-stroke:0.14px #1e7ca8;transform:scaleX(1.063);transform-origin:0 0;">Highest</div>
<div class="t" style="left:1161.3px;top:1083.2px;font-size:19.28px;font-weight:400;color:#2a4aa0;letter-spacing:0.16px;-webkit-text-stroke:0.43px #2a4aa0;transform:scaleX(1.016);transform-origin:0 0;">Show all</div>
<div class="t" style="left:602.1px;top:1152.8px;font-size:17.83px;font-weight:400;color:#1c1c1c;letter-spacing:-2.04px;-webkit-text-stroke:0.13px #1c1c1c;">0%</div>
<div class="t" style="left:1143.6px;top:1153.0px;font-size:17.83px;font-weight:400;color:#1c1c1c;letter-spacing:-0.22px;-webkit-text-stroke:0.13px #1c1c1c;">95%</div>
<div class="t" style="left:1186.3px;top:1241.5px;font-size:18.26px;font-weight:400;color:#3050a0;letter-spacing:-1.44px;-webkit-text-stroke:0.64px #3050a0;">97.1%</div>
<div class="t" style="left:420.8px;top:1239.5px;font-size:18.26px;font-weight:400;color:#222;letter-spacing:0.36px;-webkit-text-stroke:0.14px #222;transform:scaleX(1.036);transform-origin:0 0;">Oxley Bus Company</div>
<div class="t" style="left:1180.3px;top:1289.6px;font-size:18.26px;font-weight:400;color:#3050a0;letter-spacing:0.00px;-webkit-text-stroke:0.64px #3050a0;">96.2%</div>
<div class="t" style="left:438.1px;top:1287.5px;font-size:18.26px;font-weight:400;color:#222;letter-spacing:0.38px;-webkit-text-stroke:0.14px #222;transform:scaleX(1.039);transform-origin:0 0;">Southburgh Buses</div>
<div class="t" style="left:1176.0px;top:1337.7px;font-size:18.26px;font-weight:400;color:#3050a0;letter-spacing:0.00px;-webkit-text-stroke:0.64px #3050a0;">96.4%</div>
<div class="t" style="left:456.1px;top:1335.5px;font-size:18.26px;font-weight:400;color:#222;letter-spacing:0.40px;-webkit-text-stroke:0.14px #222;transform:scaleX(1.048);transform-origin:0 0;">Keldpool Transit</div>
<div class="t" style="left:1176.0px;top:1385.8px;font-size:18.26px;font-weight:400;color:#3050a0;letter-spacing:0.00px;-webkit-text-stroke:0.64px #3050a0;">96.3%</div>
<div class="t" style="left:417.7px;top:1383.5px;font-size:18.26px;font-weight:400;color:#222;letter-spacing:0.35px;-webkit-text-stroke:0.14px #222;transform:scaleX(1.036);transform-origin:0 0;">Souththwaite Coac…</div>
<div class="t" style="left:1176.0px;top:1433.2px;font-size:18.26px;font-weight:400;color:#3050a0;letter-spacing:0.00px;-webkit-text-stroke:0.64px #3050a0;">95.7%</div>
<div class="t" style="left:426.1px;top:1431.5px;font-size:18.26px;font-weight:400;color:#222;letter-spacing:0.10px;-webkit-text-stroke:0.14px #222;transform:scaleX(1.010);transform-origin:0 0;">Eastbrook Bus Co…</div>
<div class="t" style="left:1344.4px;top:1072.5px;font-size:21.74px;font-weight:400;color:#1c1c1c;letter-spacing:0.58px;-webkit-text-stroke:0.49px #1c1c1c;transform:scaleX(1.060);transform-origin:0 0;">Operator KPI performance: Daily over time</div>
<div class="t" style="left:1849.7px;top:1084.5px;font-size:18.26px;font-weight:400;color:#666666;letter-spacing:0.33px;-webkit-text-stroke:0.14px #666666;transform:scaleX(1.030);transform-origin:0 0;">Lowest</div>
<div class="t" style="left:1934.4px;top:1084.5px;font-size:18.26px;font-weight:400;color:#1e7ca8;letter-spacing:0.64px;-webkit-text-stroke:0.14px #1e7ca8;transform:scaleX(1.067);transform-origin:0 0;">Highest</div>
<div class="t" style="left:2047.2px;top:1071.7px;font-size:19.13px;font-weight:400;color:#1c1c1c;letter-spacing:0.42px;-webkit-text-stroke:0.43px #1c1c1c;transform:scaleX(1.045);transform-origin:0 0;">Operator performance</div>
<div class="t" style="left:2047.1px;top:1099.4px;font-size:17.97px;font-weight:400;color:#666666;letter-spacing:0.45px;-webkit-text-stroke:0.13px #666666;transform:scaleX(1.057);transform-origin:0 0;">Showing highest first</div>
<div class="t" style="left:2059.2px;top:1174.5px;font-size:18.26px;font-weight:400;color:#1e6c9a;letter-spacing:0.41px;-webkit-text-stroke:0.41px #1e6c9a;transform:scaleX(1.041);transform-origin:0 0;">Oxley Bus Company</div>
<div class="t" style="left:2059.1px;top:1237.5px;font-size:18.26px;font-weight:400;color:#222;letter-spacing:0.39px;-webkit-text-stroke:0.14px #222;transform:scaleX(1.041);transform-origin:0 0;">Southburgh Buses</div>
<div class="t" style="left:2058.0px;top:1300.5px;font-size:18.26px;font-weight:400;color:#222;letter-spacing:0.40px;-webkit-text-stroke:0.14px #222;transform:scaleX(1.049);transform-origin:0 0;">Keldpool Transit</div>
<div class="t" style="left:2059.1px;top:1363.5px;font-size:18.26px;font-weight:400;color:#222;letter-spacing:0.51px;-webkit-text-stroke:0.14px #222;transform:scaleX(1.056);transform-origin:0 0;">Souththwaite Coaches</div>
<div class="t" style="left:2058.0px;top:1426.5px;font-size:18.26px;font-weight:400;color:#222;letter-spacing:0.28px;-webkit-text-stroke:0.14px #222;transform:scaleX(1.027);transform-origin:0 0;">Eastbrook Bus Compa…</div>
<div class="t" style="left:1395.2px;top:1194.7px;font-size:18.26px;font-weight:400;color:#1c1c1c;letter-spacing:0.20px;-webkit-text-stroke:0.14px #1c1c1c;transform:scaleX(1.010);transform-origin:0 0;">80</div>
<div class="t" style="left:1395.2px;top:1242.3px;font-size:18.26px;font-weight:400;color:#1c1c1c;letter-spacing:0.20px;-webkit-text-stroke:0.14px #1c1c1c;transform:scaleX(1.010);transform-origin:0 0;">60</div>
<div class="t" style="left:1395.2px;top:1290.7px;font-size:18.26px;font-weight:400;color:#1c1c1c;letter-spacing:0.20px;-webkit-text-stroke:0.14px #1c1c1c;transform:scaleX(1.010);transform-origin:0 0;">40</div>
<div class="t" style="left:1395.2px;top:1339.0px;font-size:18.26px;font-weight:400;color:#1c1c1c;letter-spacing:0.20px;-webkit-text-stroke:0.14px #1c1c1c;transform:scaleX(1.010);transform-origin:0 0;">20</div>
<div class="t" style="left:1405.7px;top:1386.4px;font-size:18.26px;font-weight:400;color:#1c1c1c;letter-spacing:0.00px;-webkit-text-stroke:0.14px #1c1c1c;">0</div>
<div class="t" style="left:1395.1px;top:1169.8px;font-size:18.55px;font-weight:700;color:#1a1a1a;letter-spacing:0.19px;transform:scaleX(1.009);transform-origin:0 0;">90</div>
<div class="t" style="left:1354.8px;top:1280.6px;font-size:16.23px;font-weight:400;color:#1a1a1a;letter-spacing:1.55px;-webkit-text-stroke:0.57px #1a1a1a;transform:translate(-50%,-50%) rotate(-90deg) scaleX(0.8);">% REACHED</div>
<div class="t" style="left:1423.3px;top:1422.3px;font-size:15.65px;font-weight:400;color:#222;letter-spacing:0.00px;-webkit-text-stroke:0.12px #222;">Mo</div>
<div class="t" style="left:1430.3px;top:1449.3px;font-size:15.65px;font-weight:400;color:#222;letter-spacing:0.00px;-webkit-text-stroke:0.12px #222;">1</div>
<div class="t" style="left:1461.2px;top:1422.3px;font-size:15.65px;font-weight:400;color:#222;letter-spacing:0.00px;-webkit-text-stroke:0.12px #222;">We</div>
<div class="t" style="left:1467.9px;top:1449.3px;font-size:15.65px;font-weight:400;color:#222;letter-spacing:0.00px;-webkit-text-stroke:0.12px #222;">3</div>
<div class="t" style="left:1502.2px;top:1422.3px;font-size:15.65px;font-weight:400;color:#222;letter-spacing:0.00px;-webkit-text-stroke:0.12px #222;">Fr</div>
<div class="t" style="left:1505.5px;top:1449.3px;font-size:15.65px;font-weight:400;color:#222;letter-spacing:0.00px;-webkit-text-stroke:0.12px #222;">5</div>
<div class="t" style="left:1538.4px;top:1422.3px;font-size:15.65px;font-weight:400;color:#222;letter-spacing:0.00px;-webkit-text-stroke:0.12px #222;">Su</div>
<div class="t" style="left:1543.6px;top:1449.3px;font-size:15.65px;font-weight:400;color:#222;letter-spacing:0.00px;-webkit-text-stroke:0.12px #222;">7</div>
<div class="t" style="left:1576.7px;top:1422.3px;font-size:15.65px;font-weight:400;color:#222;letter-spacing:0.00px;-webkit-text-stroke:0.12px #222;">Tu</div>
<div class="t" style="left:1581.2px;top:1449.3px;font-size:15.65px;font-weight:400;color:#222;letter-spacing:0.00px;-webkit-text-stroke:0.12px #222;">9</div>
<div class="t" style="left:1614.0px;top:1422.3px;font-size:15.65px;font-weight:400;color:#222;letter-spacing:0.00px;-webkit-text-stroke:0.12px #222;">Th</div>
<div class="t" style="left:1614.5px;top:1449.3px;font-size:15.65px;font-weight:400;color:#222;letter-spacing:0.00px;-webkit-text-stroke:0.12px #222;">11</div>
<div class="t" style="left:1650.6px;top:1422.3px;font-size:15.65px;font-weight:400;color:#222;letter-spacing:0.00px;-webkit-text-stroke:0.12px #222;">Sa</div>
<div class="t" style="left:1651.0px;top:1449.3px;font-size:15.65px;font-weight:400;color:#222;letter-spacing:0.00px;-webkit-text-stroke:0.12px #222;">13</div>
<div class="t" style="left:1686.4px;top:1422.3px;font-size:15.65px;font-weight:400;color:#222;letter-spacing:0.00px;-webkit-text-stroke:0.12px #222;">Mo</div>
<div class="t" style="left:1688.6px;top:1449.3px;font-size:15.65px;font-weight:400;color:#222;letter-spacing:0.00px;-webkit-text-stroke:0.12px #222;">15</div>
<div class="t" style="left:1724.3px;top:1422.3px;font-size:15.65px;font-weight:400;color:#222;letter-spacing:0.00px;-webkit-text-stroke:0.12px #222;">We</div>
<div class="t" style="left:1726.7px;top:1449.3px;font-size:15.65px;font-weight:400;color:#222;letter-spacing:0.00px;-webkit-text-stroke:0.12px #222;">17</div>
<div class="t" style="left:1765.4px;top:1422.3px;font-size:15.65px;font-weight:400;color:#222;letter-spacing:0.00px;-webkit-text-stroke:0.12px #222;">Fr</div>
<div class="t" style="left:1764.3px;top:1449.3px;font-size:15.65px;font-weight:400;color:#222;letter-spacing:0.00px;-webkit-text-stroke:0.12px #222;">19</div>
<div class="t" style="left:1801.5px;top:1422.3px;font-size:15.65px;font-weight:400;color:#222;letter-spacing:0.00px;-webkit-text-stroke:0.12px #222;">Su</div>
<div class="t" style="left:1802.4px;top:1449.3px;font-size:15.65px;font-weight:400;color:#222;letter-spacing:0.00px;-webkit-text-stroke:0.12px #222;">21</div>
<div class="t" style="left:1839.8px;top:1422.3px;font-size:15.65px;font-weight:400;color:#222;letter-spacing:0.00px;-webkit-text-stroke:0.12px #222;">Tu</div>
<div class="t" style="left:1839.5px;top:1449.3px;font-size:15.65px;font-weight:400;color:#222;letter-spacing:0.00px;-webkit-text-stroke:0.12px #222;">23</div>
<div class="t" style="left:1877.1px;top:1422.3px;font-size:15.65px;font-weight:400;color:#222;letter-spacing:0.00px;-webkit-text-stroke:0.12px #222;">Th</div>
<div class="t" style="left:1877.1px;top:1449.3px;font-size:15.65px;font-weight:400;color:#222;letter-spacing:0.00px;-webkit-text-stroke:0.12px #222;">25</div>
<div class="t" style="left:1913.8px;top:1422.3px;font-size:15.65px;font-weight:400;color:#222;letter-spacing:0.00px;-webkit-text-stroke:0.12px #222;">Sa</div>
<div class="t" style="left:1915.2px;top:1449.3px;font-size:15.65px;font-weight:400;color:#222;letter-spacing:0.00px;-webkit-text-stroke:0.12px #222;">27</div>
<div class="t" style="left:1949.6px;top:1422.3px;font-size:15.65px;font-weight:400;color:#222;letter-spacing:0.00px;-webkit-text-stroke:0.12px #222;">Mo</div>
<div class="t" style="left:1952.8px;top:1449.3px;font-size:15.65px;font-weight:400;color:#222;letter-spacing:0.00px;-webkit-text-stroke:0.12px #222;">29</div>
<div class="t" style="left:1987.5px;top:1422.3px;font-size:15.65px;font-weight:400;color:#222;letter-spacing:0.00px;-webkit-text-stroke:0.12px #222;">We</div>
<div class="t" style="left:1990.3px;top:1449.3px;font-size:15.65px;font-weight:400;color:#222;letter-spacing:0.00px;-webkit-text-stroke:0.12px #222;">31</div>
<div class="t" style="left:1695.8px;top:1488.7px;font-size:15.07px;font-weight:400;color:#1a1a1a;letter-spacing:2.12px;-webkit-text-stroke:0.34px #1a1a1a;transform:scaleX(0.900);transform-origin:0 0;">DAYS</div>
<svg style="left:0;top:0" width="600" height="420" viewBox="0 0 600 420"><path d="M60,164.8 H512.5" stroke="#e99a38" stroke-width="3.2" stroke-linecap="round"/><path d="M60,353.7 H356" stroke="#e99a38" stroke-width="3.2" stroke-linecap="round"/><circle cx="47.9" cy="164.7" r="47.8" fill="#e99a38"/><circle cx="48.3" cy="353.8" r="47.9" fill="#e99a38"/></svg>
<svg style="left:30px;top:140px" width="30" height="50" viewBox="30 140 30 50"><path d="M53.1,146.9 V181.8 H46.1 V154.9 L37.9,158 V152.2 Z" fill="#fff"/></svg>
<div class="t" style="left:31px;top:328px;width:36px;text-align:center;font-size:50px;font-weight:700;color:#fff;">2</div>
</body></html>
